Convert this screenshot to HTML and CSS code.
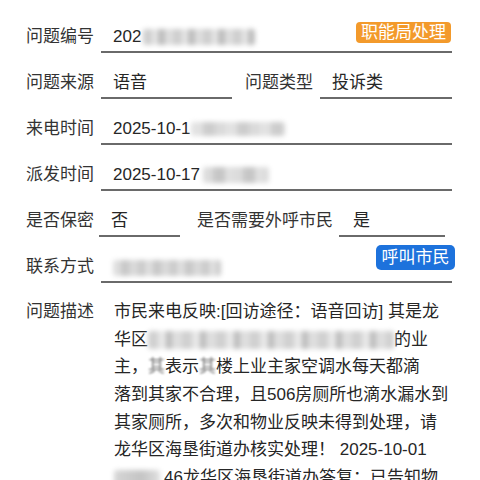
FILE: index.html
```html
<!DOCTYPE html>
<html lang="zh-CN">
<head>
<meta charset="utf-8">
<title>问题详情</title>
<link rel="stylesheet" href="styles.css">
</head>
<body>
<div class="form">
  <div class="row">
    <div class="label">问题编号</div>
    <div class="field grow">
      <span class="val">202<span class="blur blur-id"></span></span>
      <span class="btn btn-orange">职能局处理</span>
    </div>
  </div>
  <div class="row">
    <div class="label">问题来源</div>
    <div class="field f-source"><span class="val">语音</span></div>
    <div class="label label2">问题类型</div>
    <div class="field f-type"><span class="val">投诉类</span></div>
  </div>
  <div class="row">
    <div class="label">来电时间</div>
    <div class="field grow"><span class="val">2025-10-1<span class="blur blur-time1"></span></span></div>
  </div>
  <div class="row">
    <div class="label">派发时间</div>
    <div class="field grow"><span class="val">2025-10-17 <span class="blur blur-time2"></span></span></div>
  </div>
  <div class="row">
    <div class="label">是否保密</div>
    <div class="field f-secret"><span class="val">否</span></div>
    <div class="label label-call">是否需要外呼市民</div>
    <div class="field f-call"><span class="val">是</span></div>
  </div>
  <div class="row">
    <div class="label">联系方式</div>
    <div class="field grow">
      <span class="val"><span class="blur blur-phone"></span></span>
      <span class="btn btn-blue">呼叫市民</span>
    </div>
  </div>
  <div class="desc-row">
    <div class="label desc-label">问题描述</div>
    <div class="desc">
      <div class="line">市民来电反映:[回访途径：语音回访] 其是龙</div>
      <div class="line">华区<span class="blur blur-addr"></span>的业</div>
      <div class="line">主，<span class="soft">其</span>表示<span class="soft">其</span>楼上业主家空调水每天都滴</div>
      <div class="line">落到其家不合理，且506房厕所也滴水漏水到</div>
      <div class="line">其家厕所，多次和物业反映未得到处理，请</div>
      <div class="line">龙华区海垦街道办核实处理！ 2025-10-01</div>
      <div class="line"><span class="blur blur-date"></span>46龙华区海垦街道办答复：已告知物</div>
    </div>
  </div>
</div>
</body>
</html>
```

FILE: styles.css
```css
html, body {
  margin: 0;
  padding: 0;
  background: #ffffff;
  overflow: hidden;
}

body {
  width: 480px;
  height: 480px;
  font-family: "Liberation Sans", "Noto Sans CJK SC", sans-serif;
  color: #2b2b2b;
}

.form {
  padding: 22px 28px 0 26px;
  display: flex;
  flex-direction: column;
  gap: 15px;
}

.row {
  display: flex;
  align-items: flex-start;
}

.label {
  width: 75px;
  flex: none;
  font-size: 17px;
  line-height: 29px;
  color: #333333;
  white-space: nowrap;
}

.field {
  height: 29px;
  border-bottom: 2px solid #6a6a6a;
  display: flex;
  align-items: center;
  padding-left: 12px;
  box-sizing: content-box;
  font-size: 17px;
  line-height: 29px;
  white-space: nowrap;
}

.grow {
  flex: 1;
  justify-content: space-between;
  align-items: flex-start;
  padding-right: 0;
}

.val {
  display: inline-flex;
  align-items: center;
  height: 29px;
  color: #262626;
}

.f-source { width: 119px; }
.label2 { margin-left: 13px; }
.f-type { width: 120px; }

.f-secret { width: 69px; margin-left: -2px; }
.label-call { margin-left: 17px; width: 142px; }
.f-call { width: 92px; padding-left: 14px; margin-left: 0; }

.btn {
  color: #ffffff;
  font-size: 17px;
  border-radius: 4px;
  text-align: center;
  flex: none;
}

.btn-orange {
  background: #f39a2b;
  width: 95px;
  height: 21px;
  line-height: 21px;
  margin-right: 1px;
}

.btn-blue {
  background: #1d72dc;
  width: 79px;
  height: 25px;
  line-height: 25px;
  margin-top: -7px;
  margin-right: -3px;
  border-radius: 5px;
}

.blur {
  display: inline-block;
  vertical-align: middle;
  filter: blur(2.5px);
  border-radius: 3px;
}

.blur-id {
  width: 112px;
  height: 16px;
  margin-left: 2px;
  background:
    repeating-linear-gradient(90deg, #cfcfcf 0 9px, #e6e6e6 9px 15px, #bdbdbd 15px 22px, #dedede 22px 30px);
}

.blur-time1 {
  width: 94px;
  height: 14px;
  margin-left: 0;
  background:
    repeating-linear-gradient(90deg, #e2e2e2 0 12px, #cdcdcd 12px 24px, #dadada 24px 34px);
}

.blur-time2 {
  width: 66px;
  height: 16px;
  margin-left: 3px;
  background:
    repeating-linear-gradient(90deg, #dcdcdc 0 10px, #c6c6c6 10px 22px, #e0e0e0 22px 30px);
}

.blur-phone {
  width: 108px;
  height: 16px;
  margin-top: 2px;
  background:
    repeating-linear-gradient(90deg, #dedede 0 8px, #c8c8c8 8px 16px, #d9d9d9 16px 25px, #cbcbcb 25px 32px);
}

.desc-row {
  display: flex;
  align-items: flex-start;
}

.desc-label {
  line-height: 27.7px;
}

.desc {
  padding-left: 13px;
  font-size: 17px;
  line-height: 27.7px;
  color: #262626;
}

.line {
  white-space: nowrap;
  height: 27.7px;
}

.blur-addr {
  width: 246px;
  height: 18px;
  background:
    repeating-linear-gradient(90deg, #d0d0d0 0 10px, #e8e8e8 10px 18px, #bcbcbc 18px 24px, #dedede 24px 34px);
}

.blur-date {
  width: 46px;
  height: 18px;
  margin-right: 4px;
  background: linear-gradient(90deg, #d6d6d6, #c4c4c4 60%, #e0e0e0);
}

.soft {
  filter: blur(1px);
  color: #7a7a7a;
}
```
